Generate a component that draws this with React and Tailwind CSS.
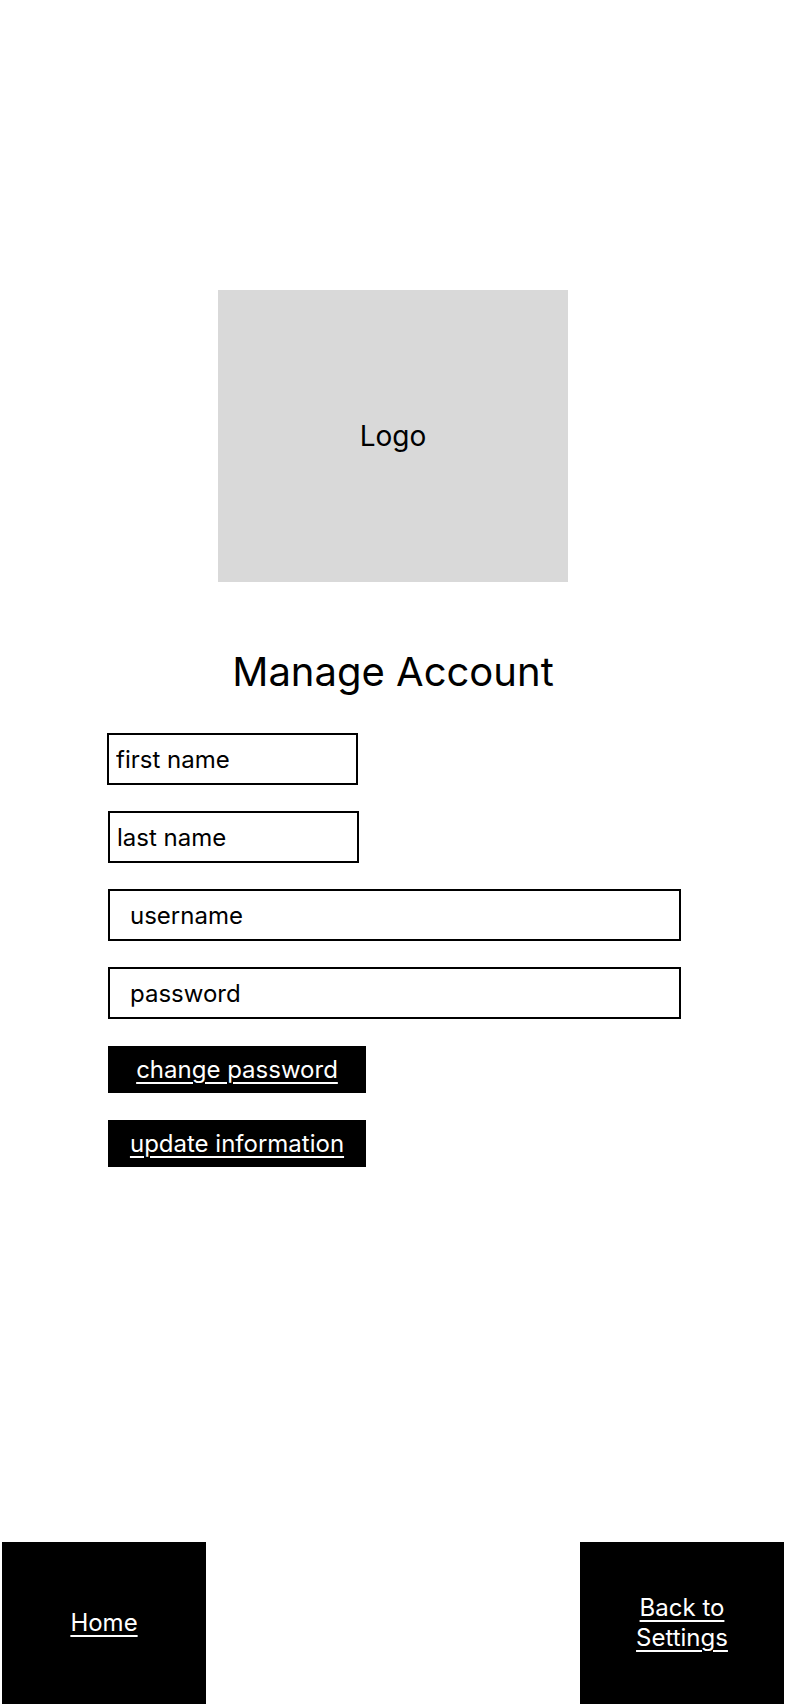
import React from 'react'

function Field({ placeholder, className }) {
  return (
    <input
      type="text"
      placeholder={placeholder}
      className={`block h-[52px] border-2 border-black bg-white text-[24px] text-black placeholder:text-black outline-none ${className}`}
    />
  )
}

function ActionButton({ children }) {
  return (
    <button
      type="button"
      className="flex h-[47px] w-[258px] items-center justify-center bg-black text-[24px] text-white underline underline-offset-4 decoration-[1.5px]"
    >
      {children}
    </button>
  )
}

export default function App() {
  return (
    <div
      className="flex h-[1704px] w-full flex-col bg-white text-black"
      style={{ fontFamily: 'Inter, "Noto Sans", sans-serif' }}
    >
      {/* Logo placeholder */}
      <div className="flex justify-center pt-[290px]">
        <div className="flex h-[292px] w-[350px] items-center justify-center bg-[#d9d9d9] text-[28px]">
          Logo
        </div>
      </div>

      <h1 className="mt-[66px] text-center text-[40px] leading-[48px]">Manage Account</h1>

      {/* Account form */}
      <div className="mt-[37px] flex flex-col pl-[108px]">
        <Field placeholder="first name" className="-ml-px w-[251px] px-[7px]" />
        <Field placeholder="last name" className="mt-[26px] w-[251px] px-[7px]" />
        <Field placeholder="username" className="mt-[26px] w-[573px] px-[20px]" />
        <Field placeholder="password" className="mt-[26px] w-[573px] px-[20px]" />
        <div className="mt-[27px]">
          <ActionButton>change password</ActionButton>
        </div>
        <div className="mt-[27px]">
          <ActionButton>update information</ActionButton>
        </div>
      </div>

      <div className="flex-1" />

      {/* Bottom navigation */}
      <div className="flex h-[162px] justify-between px-[2px]">
        <a
          href="#"
          className="flex w-[204px] items-center justify-center bg-black text-[24px] text-white underline underline-offset-4 decoration-[1.5px]"
        >
          Home
        </a>
        <a
          href="#"
          className="flex w-[204px] items-center justify-center bg-black text-center text-[24px] leading-[30px] text-white underline underline-offset-4 decoration-[1.5px]"
        >
          Back to
          <br />
          Settings
        </a>
      </div>
    </div>
  )
}
